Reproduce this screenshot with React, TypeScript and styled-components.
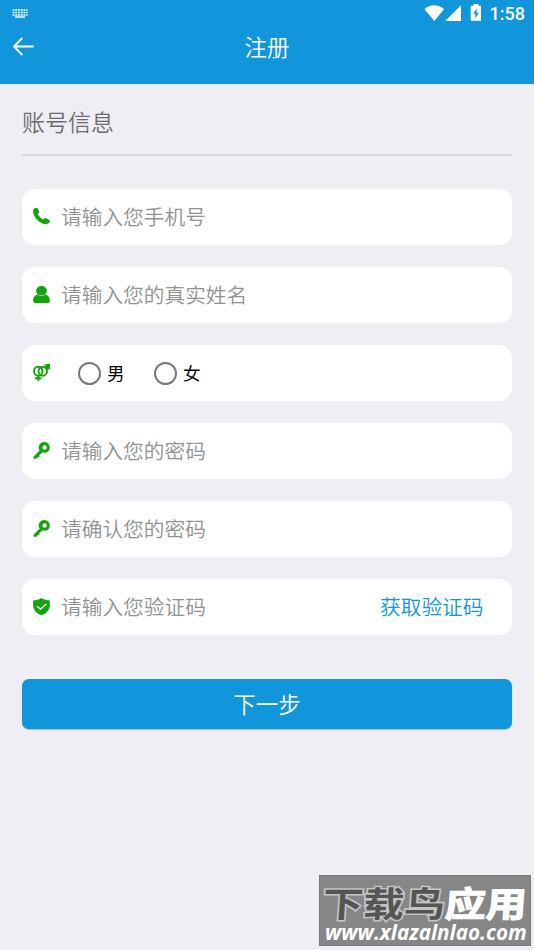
import React from 'react';
import styled, { createGlobalStyle } from 'styled-components';

const Global = createGlobalStyle`
  * { box-sizing: border-box; }
  body { margin: 0; background: #efeef4; font-family: Roboto, "Noto Sans CJK SC", sans-serif; }
`;

const Screen = styled.div`
  position: relative;
  width: 534px;
  height: 950px;
  overflow: hidden;
  background: #efeef4;
`;

const Header = styled.header`
  height: 84px;
  background: #1296db;
  color: #fff;
`;

const StatusBar = styled.div`
  height: 26px;
  padding: 0 9px 0 12px;
  display: flex;
  align-items: center;
  justify-content: space-between;
`;

const StatusIcons = styled.div`
  display: flex;
  align-items: center;
  height: 26px;
`;

const Clock = styled.span`
  margin-left: 8px;
  padding-top: 2px;
  font: 500 18px/26px Roboto, sans-serif;
`;

const TitleBar = styled.div`
  height: 42px;
  padding: 0 12px;
  display: grid;
  grid-template-columns: 24px 1fr 24px;
  align-items: center;
`;

const Title = styled.h1`
  margin: 0;
  padding-top: 2px;
  font-size: 22.5px;
  font-weight: 350;
  line-height: 40px;
  text-align: center;
`;

const Content = styled.main`
  padding: 22px 22px 0;
`;

const SectionTitle = styled.h2`
  margin: 0 0 33px;
  padding-top: 1px;
  height: 50px;
  border-bottom: 2px solid #d9d8de;
  color: #6c6c6e;
  font-size: 23px;
  font-weight: 350;
  line-height: 33px;
`;

const Form = styled.form`
  display: flex;
  flex-direction: column;
  gap: 22px;
`;

const Field = styled.div`
  height: 56px;
  padding: 0 28px 0 11px;
  display: flex;
  align-items: center;
  border-radius: 13px;
  background: #fff;
`;

const FieldIcon = styled.svg`
  flex: none;
  width: 17px;
  height: 17px;
  margin: 0 11px 1px 0;
  fill: #12a40b;
`;

const Input = styled.input`
  flex: 1;
  min-width: 0;
  height: 42px;
  padding: 2px 0 0;
  border: 0;
  outline: 0;
  background: transparent;
  color: #333;
  font: 350 20.7px Roboto, "Noto Sans CJK SC", sans-serif;
  &::placeholder { color: #929292; opacity: 1; }
`;

const CodeButton = styled.button`
  padding: 2px 0.5px 0 0;
  border: 0;
  background: none;
  color: #1296db;
  font: 350 20.7px/30px Roboto, "Noto Sans CJK SC", sans-serif;
`;

const Choice = styled.label`
  display: flex;
  align-items: center;
  width: 76px;
  font-size: 17.6px;
  line-height: 26px;
  color: #000;
`;

const ChoiceText = styled.span`
  padding-top: 2px;
`;

const Choices = styled.div`
  display: flex;
  margin-left: 17px;
`;

const Radio = styled.input`
  appearance: none;
  width: 23px;
  height: 23px;
  margin: 0 6px 0 0;
  border: 2px solid #7a7a7a;
  border-radius: 50%;
  &:checked { background: radial-gradient(#1296db 45%, transparent 50%); }
`;

const Submit = styled.button`
  height: 50px;
  margin-top: 22px;
  padding: 2px 0 0;
  border: 0;
  border-radius: 7px;
  background: #1296db;
  box-shadow: 0 1px 1px rgba(60, 80, 100, 0.35);
  color: #fff;
  font: 350 22.5px/48px Roboto, "Noto Sans CJK SC", sans-serif;
`;

const Watermark = styled.div`
  position: absolute;
  left: 319px;
  top: 875px;
  width: 212px;
  height: 71px;
  border: 1px solid #777;
  background: #868686;
  color: #fff;
  white-space: nowrap;
`;

const WatermarkName = styled.div`
  height: 49px;
  padding-left: 3px;
  font: 700 40.8px/53px "Noto Sans CJK SC", sans-serif;
  transform: skewX(-4deg) scaleY(0.86);
`;

const Outlined = styled.span`
  color: #555;
  -webkit-text-stroke: 3.6px #c4c4c4;
  paint-order: stroke fill;
`;

const Heavy = styled.span`
  -webkit-text-stroke: 1.4px #fff;
`;

const WatermarkUrl = styled.div`
  padding-left: 5px;
  margin-top: -5px;
  font: italic 700 20.7px/24px "Open Sans", sans-serif;
`;

const PhoneIcon = () => (
  <FieldIcon viewBox="0 0 17 17">
    <path d="M.8 1.1C1.800.1 4.100-.4 4.900.6l1.200 2.700c.4 1-.1 1.700-1 2.100-.5.3-.3.9 0 1.400 1 1.700 2.300 3 4 4.200.7.5 1.200.5 1.800-.1.8-.8 1.600-1.100 2.400-.7l3 1.800c.9.6.8 1.500.2 2.300-1 1.500-3 2.200-5.100 1.700C6.300 14.900 1.500 9.900.3 4.900-.1 3.300 0 1.900.8 1.100z" />
  </FieldIcon>
);

const PersonIcon = () => (
  <FieldIcon viewBox="0 0 17 17">
    <ellipse cx="8.5" cy="4.8" rx="5.4" ry="4.8" />
    <path d="M4.300 8.600c2.400 1.900 6 1.900 8.400 0 2.700 1 4.200 3.300 4.200 5.800 0 1.800-.9 2.500-2.500 2.500H2.600C1 16.900.1 16.200.1 14.400c0-2.500 1.500-4.800 4.200-5.800z" />
  </FieldIcon>
);

const GenderIcon = () => (
  <FieldIcon viewBox="0 0 17 17">
    <g fill="none" stroke="#12a40b" strokeWidth="1.9">
      <ellipse cx="5.2" cy="7.200" rx="4.200" ry="4.500" />
      <ellipse cx="9.800" cy="7.200" rx="4.200" ry="4.500" />
      <path d="M5.300 11V17M2 14.300h6.600M12.400 4.600l2.800-2.800" />
    </g>
    <path d="M10.800.2 17 0v6l-1.600-1.200-1.600 1.400-2.500-2.500 1.300-1.600z" />
  </FieldIcon>
);

const KeyIcon = () => (
  <FieldIcon viewBox="0 0 17 17">
    <path fillRule="evenodd" d="M11.500.1a5.300 5.300 0 0 1 0 10.600c-.8 0-1.500-.1-2.100-.4l-3.300 3.300.5.6-1 1-.6-.5-.8.7.4.500-.9.9-.6-.5c-.7.700-1.600 1-2.300.3-.8-.8-.5-1.700.2-2.400l5.700-5.700A5.300 5.300 0 0 1 11.500.1zm.1 3.100a2.200 2.200 0 1 0 0 4.400 2.200 2.200 0 0 0 0-4.400z" />
  </FieldIcon>
);

const ShieldIcon = () => (
  <FieldIcon viewBox="0 0 17 17">
    <path d="M8.500 0c2.400 1.700 5 2.300 8 2.300.4 1.600.5 3.300.4 5.100-.4 4.800-3.500 8.200-8.400 9.600C3.600 15.600.5 12.200.1 7.400 0 5.600.1 3.900.500 2.300c3 0 5.600-.6 8-2.300z" />
    <path d="m4 8.300 3.500 2.800 5.900-5" fill="none" stroke="#fff" strokeWidth="1.300" />
  </FieldIcon>
);

const KeyboardIcon = () => (
  <svg width="16" height="9" viewBox="0 0 16 9" fill="none" stroke="#fff">
    <path d="M.5 1h15M.5 3.500h15M.5 6h15" strokeWidth="1.400" strokeDasharray="2 .75" />
    <path d="M3 8h10" strokeWidth="1.400" />
  </svg>
);

const SystemIcons = () => (
  <svg width="58" height="20" viewBox="0 0 58 20" fill="#fff">
    <path d="M.5 6.300C5.800.9 14.700.9 20 6.300L10.300 18z" />
    <path d="M37 2.300V18H21.200z" />
    <path fillRule="evenodd" d="M49.500 1h5v1.700H57v15H46.700v-15h2.800zm3.600 4.200-4 5.500h2.400l-.6 4.800 4-5.800h-2.400z" />
  </svg>
);

const BackIcon = () => (
  <svg width="24" height="20" viewBox="0 0 24 20" fill="none" stroke="#fff" strokeWidth="1.8" strokeLinecap="round" strokeLinejoin="round">
    <path d="M21 9.500H2M9.800 1.500 2 9.500l7.800 8" />
  </svg>
);

const genders = ['男', '女'];

export default function App() {
  return (
    <Screen>
      <Global />
      <Header>
        <StatusBar>
          <KeyboardIcon />
          <StatusIcons>
            <SystemIcons />
            <Clock>1:58</Clock>
          </StatusIcons>
        </StatusBar>
        <TitleBar>
          <BackIcon />
          <Title>注册</Title>
        </TitleBar>
      </Header>
      <Content>
        <SectionTitle>账号信息</SectionTitle>
        <Form onSubmit={(event) => event.preventDefault()}>
          <Field><PhoneIcon /><Input type="tel" placeholder="请输入您手机号" /></Field>
          <Field><PersonIcon /><Input placeholder="请输入您的真实姓名" /></Field>
          <Field>
            <GenderIcon />
            <Choices>
              {genders.map((gender) => (
                <Choice key={gender}>
                  <Radio type="radio" name="gender" />
                  <ChoiceText>{gender}</ChoiceText>
                </Choice>
              ))}
            </Choices>
          </Field>
          <Field><KeyIcon /><Input type="password" placeholder="请输入您的密码" /></Field>
          <Field><KeyIcon /><Input type="password" placeholder="请确认您的密码" /></Field>
          <Field>
            <ShieldIcon />
            <Input placeholder="请输入您验证码" />
            <CodeButton type="button">获取验证码</CodeButton>
          </Field>
          <Submit type="submit">下一步</Submit>
        </Form>
      </Content>
      <Watermark>
        <WatermarkName><Outlined>下载鸟</Outlined><Heavy>应用</Heavy></WatermarkName>
        <WatermarkUrl>www.xlazalnlao.com</WatermarkUrl>
      </Watermark>
    </Screen>
  );
}
